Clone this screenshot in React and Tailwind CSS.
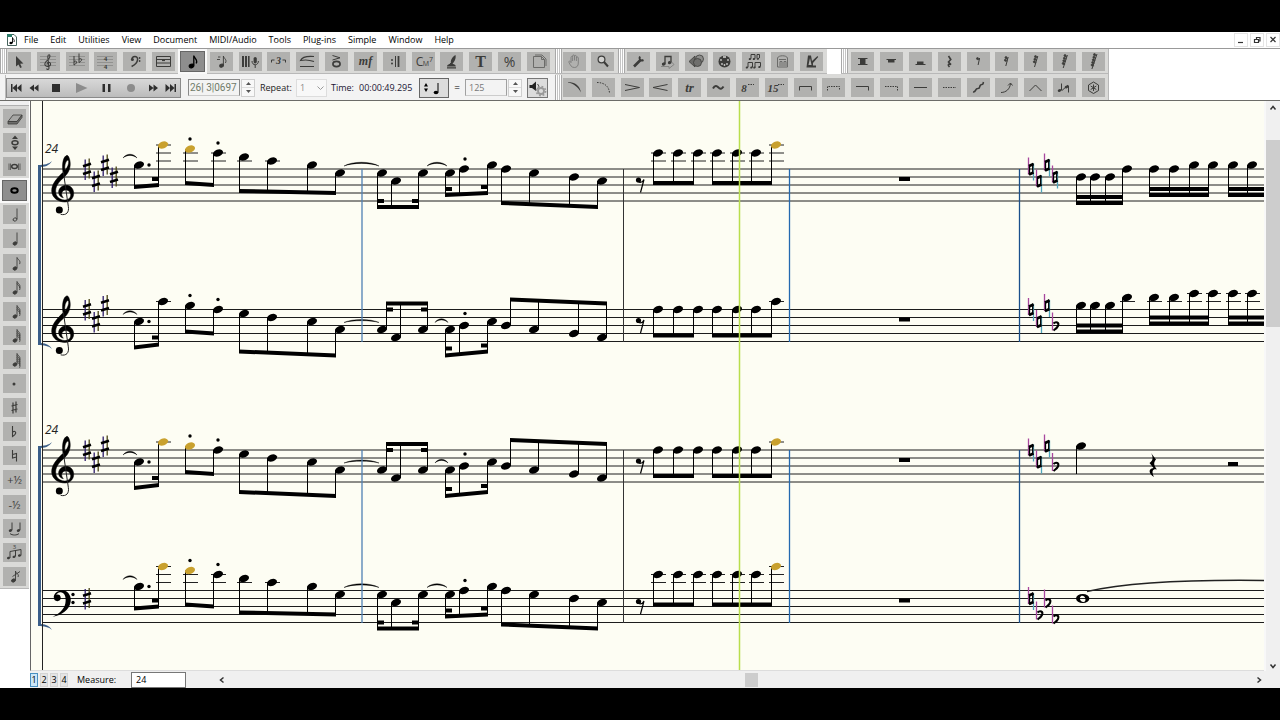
import React, { useState } from 'react';

const INK = '#3c3c3a';
const GOLD = '#c9a12e';

/* ---------- small shapes shared by the icons ---------- */

const MiniStaff = () => (
  <path d="M3 4.5H19M3 7.5H19M3 10.5H19M3 13.5H19" stroke="#858583" strokeWidth="0.7" fill="none" />
);

const Head = ({ x, y, r = 2 }) => (
  <ellipse cx={x} cy={y} rx={r} ry={r * 0.75} transform={`rotate(-20 ${x} ${y})`} />
);

// a note with the given number of flags, used in the duration palette
const FlagNote = ({ flags = 0, hollow }) => (
  <g fill={hollow ? 'none' : INK} stroke={INK} strokeWidth="0.9">
    <Head x={12} y={14.5} r={2} />
    <path d="M14 14V3.5" fill="none" />
    {Array.from({ length: flags }, (_, i) => (
      <path key={i} d={`M14 ${3.5 + i * 1.9}c1 2.4 4 3 2.6 6.6`} fill="none" />
    ))}
  </g>
);

const FlagRest = ({ flags }) => (
  <g fill={INK} stroke={INK} strokeWidth="0.8">
    <path d={`M${12 + flags * 0.6} ${7 - flags}L${11.4 - flags * 0.3} ${12 + flags}`} fill="none" strokeWidth="1" />
    {Array.from({ length: flags }, (_, i) => (
      <g key={i}>
        <circle cx={10 + flags * 0.5 - i * 0.6} cy={7.6 - flags + i * 2.6} r="1" />
        <path d={`M${10 + flags * 0.5 - i * 0.6} ${8.4 - flags + i * 2.6}h2`} fill="none" />
      </g>
    ))}
  </g>
);

const T = ({ x = 11.5, y = 14, size = 12, serif, italic, bold, children }) => (
  <text
    x={x}
    y={y}
    fontSize={size}
    textAnchor="middle"
    fill={INK}
    fontFamily={serif ? '"Liberation Serif", serif' : '"Open Sans", sans-serif'}
    fontStyle={italic ? 'italic' : 'normal'}
    fontWeight={bold ? 700 : 400}
  >
    {children}
  </text>
);

const line = (d, extra) => <path d={d} fill="none" stroke={INK} strokeWidth="1" {...extra} />;
const solid = (d) => <path d={d} fill={INK} />;

const mainTools = [
  ['Selection', solid('M8 4V14.5L10.5 12.4L12.2 16L13.8 15.2L12.2 11.7L15.4 11.4Z')],
  ['Clef', <><MiniStaff />{line('M12 16.5L10.8 5c0-3 2.6-3 2 0c-.5 3-5 4-5 7c0 3.4 6 3 5.8 0c-.3-2.6-4-2-3.4.6M12 16.5c-.6 1.4-2.4 1-2.4 0', { strokeWidth: 1.1 })}</>],
  ['Key signature', <><MiniStaff />{line('M8 4v9c4-2 3-5 0-3.4M13 1.5v9c4-2 3-5 0-3.4')}</>],
  ['Time signature', <><MiniStaff /><T y={8.5} size={7} serif bold>4</T><T y={16.5} size={7} serif bold>4</T></>],
  ['Bass clef', <g fill={INK}>{line('M9 7.5c0-4 6-4 5.6 0c-.3 4-3 5.500-6 7', { strokeWidth: 1.5 })}<circle cx="9.400" cy="7.600" r="1.500" /><circle cx="16.600" cy="6" r="0.900" /><circle cx="16.600" cy="9" r="0.900" /></g>],
  ['Measure', <>{line('M4.5 4.5H18.5V14.5H4.5ZM4.5 7.5H18.5M4.5 11H18.5')}{solid('M10 7.5h3v1.6h-3z')}</>],
  ['Simple entry', <g fill="#000" stroke="#000"><Head x={10.5} y={14} r={2.4} /><path d="M12.8 13.6V3.5c.4 3 4.6 4 2.4 8" fill="none" strokeWidth="1.3" /></g>],
  ['Speedy entry', <g fill={INK} stroke={INK}><Head x={11.6} y={13.6} r={2} /><path d="M13.4 13V4c.4 2.6 4 3.6 2 7M8 5h2.4M7 7.5h3" fill="none" strokeWidth="0.9" /></g>],
  ['HyperScribe', <>{solid('M3 4h2v11h-2zM6 4h2v11H6zM9 4h1.6v11H9z')}<rect x="14.6" y="5" width="3.2" height="6.4" rx="1.6" fill={INK} />{line('M13 9c0 5 6.4 5 6.4 0M16.2 13v3')}</>],
  ['Tuplet', <><T x={11.5} y={12} size={10} serif italic bold>3</T>{line('M4.5 10.5V8H7.5M15.5 8H18.5V10.5')}</>],
  ['Smart shape', line('M18 4.500C12 4 6 5 4.500 8.500C9 7.500 14 8 18 9.500M4 14.500H18', { strokeWidth: 1.1 })],
  ['Articulation', <>{line('M7.5 3.5L15 5.8L7.5 8')}<ellipse cx="11.5" cy="12" rx="3.6" ry="2.6" fill="none" stroke={INK} strokeWidth="1.6" /></>],
  ['Expression', <T y={13} size={12} serif italic bold>mf</T>],
  ['Repeat', <>{line('M12.5 4V15', { strokeWidth: 1 })}{line('M15.5 4V15', { strokeWidth: 1.8 })}<circle cx="9" cy="8" r="1" fill={INK} /><circle cx="9" cy="11.5" r="1" fill={INK} /></>],
  ['Chord', <><T x={7.5} y={14} size={12}>C</T><T x={14} y={14} size={7}>M</T><T x={19} y={9.5} size={7}>7</T></>],
  ['Lyrics', solid('M7 14.5c0-2 3-2.6 4-3c-.8-3 1-6.500 4.500-8.500c.8 3.200-1 7-3 8.700c2 .5 3.300 1.200 3.300 2.800zM7 15.200h9v1.200h-9z')],
  ['Text', <T y={15} size={16} serif bold>T</T>],
  ['Resize', <T y={14.5} size={14}>%</T>],
  ['Page layout', line('M6.500 4.500H14.500L17.500 7.500V15.500H6.500ZM14.500 4.500V7.500H17.500M8 3H15L19 7V14', { stroke: '#6b6b69' })],
];

const viewTools = [
  ['Hand grabber', line('M8 10.500V5.500c0-1.400 1.600-1.400 1.600 0V9M9.600 5V4c0-1.400 1.900-1.400 1.900 0V8.500M11.500 4.500c0-1.400 1.900-1.400 1.900 0V9M13.400 6c0-1.400 1.900-1.400 1.900 0v5c0 3-1.500 4.500-4 4.500c-3 0-4-2.400-5.500-5.500c0-1.400 1.400-1 2.200.5', { stroke: '#7c7c7a', strokeWidth: 0.9 })],
  ['Zoom', <><circle cx="10.500" cy="7.500" r="3.400" fill="#d0d0ce" stroke={INK} strokeWidth="1.200" />{line('M13 10L17 14.500', { strokeWidth: 2 })}</>],
];

const advancedTools = [
  ['Special tools', <>{line('M7 14.500L13.500 8', { strokeWidth: 2.6 })}{line('M13 4.500C11.500 7 13.500 9.500 16.500 8', { strokeWidth: 2 })}</>],
  ['Mirror', <g fill={INK}><path d="M9 11.500V4.500H15V10" fill="none" stroke={INK} strokeWidth="1.300" /><Head x={7.8} y={12} /><Head x={13.800} y={10.500} /><path d="M5 14.500h8v2l5-4-3-3" fill="none" stroke="#858583" /></g>],
  ['Graphics', <><path d="M4 9.500L10 4V15Z" fill="#6a6a68" stroke={INK} strokeWidth="0.8" /><circle cx="14.500" cy="7" r="4" fill="#8c8c8a" stroke={INK} strokeWidth="0.800" /><circle cx="12.500" cy="10.500" r="4" fill="#6f6f6d" stroke={INK} strokeWidth="0.800" /></>],
  ['MIDI', <><circle cx="11.500" cy="9.500" r="6" fill={INK} />{['8 8', '9 12', '11.5 13', '14 12', '15 8'].map((p) => { const [x, y] = p.split(' '); return <circle key={p} cx={x} cy={y} r="0.900" fill="#c8c8c6" />; })}<path d="M10 3.500h3v2.500h-3z" fill="#b1b1af" /></>],
  ['Ossia', <g fill={INK}>{line('M9 6.500V2.500H13V6.500M15 6.500V2.500H17.500V6M6 15V10.500H10.500V15M13 15V10.500H18.500V14.500')}<Head x={8} y={7} r={1.300} /><Head x={12} y={7} r={1.300} /><Head x={16} y={6.800} r={1.300} /><Head x={5} y={15.500} r={1.300} /><Head x={9.500} y={15.500} r={1.300} /><Head x={12.500} y={15.500} r={1.300} /><Head x={17.500} y={15} r={1.300} /></g>],
  ['Tempo', <>{line('M6.500 15V6c1-3 9-3 10 0v9zM9 14v-4.500h2V14M13 14v-4.500h2V14M8 7.500h7', { stroke: '#6b6b69' })}</>],
  ['Playback', <>{solid('M8 3.500H11L12 9L17.500 4L18.200 5L13 11V13.500H16V15.500H6.500Z')}<path d="M8.500 13L10 6L11.500 13Z" fill="#b1b1af" /></>],
];

const restTools = [
  ['Double whole rest', <>{line('M7 6.500H16.500M7 12.500H16.500')}{solid('M9 7h5.500v5h-5.500z')}</>],
  ['Whole rest', <>{line('M6.500 7.500H16')}{solid('M8 8h6.500v2.500h-6.500z')}</>],
  ['Half rest', <>{line('M6.500 12.500H16.500')}{solid('M8 9.500h6.500v3h-6.500z')}</>],
  ['Quarter rest', line('M10.500 4L12.800 7.500L10.500 10L13 12.500C10 11.500 9.500 13 11.500 15', { strokeWidth: 1.6 })],
  ...[['Eighth rest', 1], ['16th rest', 2], ['32nd rest', 3], ['64th rest', 4], ['128th rest', 5]].map(([n, f]) => [n, <FlagRest flags={f} />]),
];

const shapeTools = [
  ['Slur', solid('M5 4C12 4 17 8 18 14.500C15 9 11 6 5 4.600Z')],
  ['Dashed slur', line('M5 4.500C12 4.500 17 8 17.500 15', { strokeDasharray: '1.500 1.200' })],
  ['Decrescendo', line('M4 6.500L18.500 9.500L4 12.500')],
  ['Crescendo', line('M18.500 6.500L4 9.500L18.500 12.500')],
  ['Trill', <T y={13.500} size={13} serif italic bold>tr</T>],
  ['Trill extension', line('M6 10.500C8 6.500 10 8 11.500 9.500C13 11.500 15 11 16.500 8.500', { strokeWidth: 2 })],
  ['8va', <><T x={8} y={13.500} size={11} serif italic bold>8</T>{line('M12 6.500H18', { strokeDasharray: '1.500 1' })}</>],
  ['15ma', <><T x={8} y={13.500} size={11} serif italic bold>15</T>{line('M13 6.500H19', { strokeDasharray: '1.500 1' })}</>],
  ['Bracket', line('M5.500 12.500V8.500H17.500V12.500')],
  ['Dashed bracket', line('M5.500 12.500V8.500H17.500V12.500', { strokeDasharray: '1.500 1' })],
  ['Hook', line('M5 8.500H17.500V12.500')],
  ['Dashed hook', line('M5 8.500H17.500V12.500', { strokeDasharray: '1.500 1' })],
  ['Line', line('M5 9.500H18')],
  ['Dashed line', line('M5 9.500H18', { strokeDasharray: '1.500 1' })],
  ['Glissando', line('M6 14C9.500 14.500 7.500 10.500 11 10.500C14 10.500 11.500 6.500 15 6.500C16.500 6.500 16 5 16.500 4', { strokeWidth: 1.600 })],
  ['Bend', line('M6 14.500C11 14.500 15 11 15.500 5.500M13 7.500L15.500 5L17.500 7.500')],
  ['Bend hat', line('M5.500 13L11.500 7L17.500 13')],
  ['Tab slide', <g fill={INK}><Head x={6.500} y={12.500} r={1.800} /><Head x={13.500} y={9} r={1.800} />{line('M8.500 12.500V5.500M9 12.500L15 7M15.500 7.500V14.500')}</g>],
  ['Custom line', <>{line('M11.500 4L16.500 7V12.500L11.500 15.500L6.500 12.500V7Z')}{line('M11.500 6.500V13M8.700 8L14.300 11.500M14.300 8L8.700 11.500', { strokeWidth: 1 })}</>],
];

const durationTools = [
  ['Eraser', <><path d="M5 12.500L10 6H19L14 12.500Z" fill="#a6a6a4" stroke={INK} strokeWidth="0.800" /><path d="M5 12.500H14L19 6V8.500L14 15H5Z" fill="#6e6e6c" stroke={INK} strokeWidth="0.800" /></>],
  ['Repitch', <>{solid('M12 2.500L15 6H9ZM12 17L15 13.500H9Z')}<ellipse cx="12" cy="9.700" rx="3" ry="2" fill="none" stroke={INK} strokeWidth="1.500" /></>],
  ['Double whole note', <><ellipse cx="11.500" cy="9.500" rx="2.800" ry="2" fill="none" stroke={INK} strokeWidth="1.500" />{line('M6 6.500V13M7.500 6.500V13M15.500 6.500V13M17 6.500V13', { strokeWidth: 0.700 })}</>],
  ['Whole note', <ellipse cx="11.500" cy="9.500" rx="3.200" ry="2.200" fill="none" stroke="#000" strokeWidth="2" />],
  ['Half note', <FlagNote hollow />],
  ['Quarter note', <FlagNote />],
  ['Eighth note', <FlagNote flags={1} />],
  ['16th note', <FlagNote flags={2} />],
  ['32nd note', <FlagNote flags={3} />],
  ['64th note', <FlagNote flags={4} />],
  ['128th note', <FlagNote flags={5} />],
  ['Dot', <circle cx="11" cy="10" r="1.500" fill={INK} />],
  ['Sharp', line('M10 4.500V15.500M13 3.500V14.500M8.500 8L14.500 6.500M8.500 12.500L14.500 11', { strokeWidth: 1.200 })],
  ['Flat', line('M9.500 4V14.500C14.500 11.500 13 8 9.500 10', { strokeWidth: 1.100 })],
  ['Natural', line('M9.500 4V12L13.500 11M13.500 15.500V7.500L9.500 8.500', { strokeWidth: 1.100 })],
  ['Half step up', <T y={13.500} size={11}>+½</T>],
  ['Half step down', <T y={13.500} size={11}>-½</T>],
  ['Tie', <g fill={INK}><Head x={7.500} y={11.500} r={1.800} /><Head x={15.500} y={11.500} r={1.800} />{line('M9 11V3.500M17 11V3.500M7 14.500C9 16.500 14 16.500 16 14.500')}</g>],
  ['Triplet', <g fill={INK}><Head x={5.500} y={15} r={1.600} /><Head x={11} y={13.800} r={1.600} /><Head x={16.500} y={12.500} r={1.600} />{line('M7 15V8.500L18 6.500V12.500M12.500 13.500V7.500')}<T x={11.500} y={6} size={6}>3</T></g>],
  ['Grace note', <g fill={INK} stroke={INK} strokeWidth="0.900"><Head x={10.500} y={13.500} r={2} /><path d="M12.500 13V4c.4 2.600 4 3 2.500 6M9.500 9.500L17 4.500" fill="none" /></g>],
];

const Tool = ({ label, icon, active }) => (
  <button
    type="button"
    aria-label={label}
    className={
      active
        ? 'w-[23px] h-[19px] shrink-0 bg-[#8e8e8e] outline-1 outline-[#666] ring-3 ring-[#f8f8f8]'
        : 'w-[23px] h-[19px] shrink-0 bg-[#b1b1af]'
    }
  >
    <svg viewBox="0 0 23 19" className="block w-[23px] h-[19px]">{icon}</svg>
  </button>
);

const Palette = ({ tools, active, className }) => (
  <div className={`flex items-center justify-between ${className}`}>
    {tools.map(([label, icon]) => (
      <Tool key={label} label={label} icon={icon} active={active === label} />
    ))}
  </div>
);

const Grip = () => (
  <div className="w-[7px] h-full shrink-0 flex justify-between bg-white border-l border-r border-[#a8a8a8] px-px">
    <div className="w-px h-full bg-[#c4c4c4]" />
    <div className="w-px h-full bg-[#c4c4c4]" />
  </div>
);

const Spinner = ({ label }) => (
  <div className="w-[14px] h-[18px] shrink-0 flex flex-col border border-[#cfcfcf] bg-[#f8f8f8]">
    <button type="button" aria-label={`${label} up`} className="flex-1 flex items-center justify-center">
      <svg viewBox="0 0 5 3" className="w-[5px] h-[3px]"><path d="M0 3L2.500 0L5 3Z" fill="#555" /></svg>
    </button>
    <button type="button" aria-label={`${label} down`} className="flex-1 flex items-center justify-center border-t border-[#ddd]">
      <svg viewBox="0 0 5 3" className="w-[5px] h-[3px]"><path d="M0 0L2.500 3L5 0Z" fill="#555" /></svg>
    </button>
  </div>
);

const transport = [
  ['Rewind to start', 'M6 6h1.500v8H6zM12 6v8L7.500 10zM16.500 6v8L12 10z', '#2e2e2e', 'w-[17px]'],
  ['Rewind', 'M11 6.500v7L6.500 10zM15.500 6.500v7L11 10z', '#2e2e2e', 'w-[20px]'],
  ['Stop', 'M7 6h8v8H7z', '#2e2e2e', 'w-[24px]'],
  ['Play', 'M6 5v10L17.500 10z', '#8c8c8c', 'w-[25px]'],
  ['Pause', 'M7.500 6h2.500v8H7.500zM13 6h2.500v8H13z', '#2e2e2e', 'w-[25px]'],
  ['Record', 'M15 10a4 4 0 1 1-8 0a4 4 0 1 1 8 0z', '#8c8c8c', 'w-[25px]'],
  ['Fast forward', 'M7 6.500v7L11.500 10zM11.500 6.500v7L16 10z', '#2e2e2e', 'w-[19px]'],
  ['Forward to end', 'M5.500 6v8L10 10zM10 6v8L14.500 10zM14.500 6h1.500v8h-1.500z', '#2e2e2e', 'w-[18px]'],
];

/* ---------- score ---------- */

// Note: [x, position in half spaces below the top line, gold?]
// Groups carry the beam as [y at first stem, y at last stem], relative to the top line.
const outerVoice = (gold) => ({
  groups: [
    { notes: [[139, -1], [163, -6, gold]], beam: [18, 16], stubs: [[1, -1, 10]] },
    { notes: [[190, -5, gold], [218, -4]], beam: [14, 16] },
    { notes: [[244, -3], [272, -2], [312, -1], [340, 1]], beam: [22, 24] },
    { notes: [[382, 1], [396, 3], [423, 1]], beam: [38, 38], stubs: [[0, 1, 32], [2, -1, 32]] },
    { notes: [[450, 1], [464, 0], [492, -1]], beam: [26, 24], stubs: [[0, 1, 20], [2, -1, 18]] },
    { notes: [[506, 0], [534, 1], [574, 2], [602, 3]], beam: [34, 38] },
    { notes: [[658, -4], [678, -4], [698, -4]], beam: [14, 14] },
    { notes: [[717, -4], [737, -4], [756, -4], [776, -6, gold]], beam: [14, 14] },
  ],
  dots: [[149, -4], [190, -30], [218, -26], [465, -10]],
  ties: [[123, 137, -11, -16], [344, 379, -3, -8], [427, 447, -3, -8]],
});

const innerVoice = (gold) => ({
  groups: [
    { notes: [[139, 3], [163, -2, gold]], beam: [38, 35], stubs: [[1, -1, 28]] },
    { notes: [[190, -1, gold], [218, 0]], beam: [22, 24] },
    { notes: [[244, 1], [272, 2], [312, 3], [340, 5]], beam: [42, 46] },
    { notes: [[382, 5], [396, 7], [423, 5]], beam: [-6, -6], stubs: [[0, 1, 0], [2, -1, 0]], up: true },
    { notes: [[450, 5], [464, 4], [492, 3]], beam: [46, 42], stubs: [[0, 1, 39], [2, -1, 36]] },
    { notes: [[506, 4], [534, 5], [574, 6], [602, 7]], beam: [-10, -6], up: true },
    { notes: [[658, 0], [678, 0], [698, 0]], beam: [26, 26] },
    { notes: [[717, 0], [737, 0], [756, 0], [776, -2, gold]], beam: [26, 26] },
  ],
  dots: [[149, 12], [190, -14], [218, -10], [465, 4]],
  ties: [[123, 137, 5, 0], [344, 379, 13, 9], [435, 448, 13, 8]],
});

const staves = [
  {
    top: 169,
    clef: 'treble',
    sharps: [0, 3, -1, 2],
    voice: outerVoice(true),
    change: [['n', 0], ['n', 3], ['n', -1], ['n', 2]],
    tail: [
      { notes: [[1081, 2], [1095, 2], [1110, 2], [1127, 0]], beam: [34, 34], second: -6 },
      { notes: [[1154, 0], [1174, 0], [1194, -1], [1213, -1]], beam: [26, 26], second: -6 },
      { notes: [[1233, -1], [1252, -1]], beam: [26, 26], second: -6, open: true },
    ],
  },
  {
    top: 309.5,
    clef: 'treble',
    sharps: [0, 3, -1],
    voice: innerVoice(false),
    change: [['n', 0], ['n', 3], ['n', -1], ['b', 4]],
    tail: [
      { notes: [[1081, -1], [1095, -1], [1110, -1], [1127, -3]], beam: [22, 22], second: -6 },
      { notes: [[1154, -3], [1174, -3], [1194, -4], [1213, -4]], beam: [14, 14], second: -6 },
      { notes: [[1233, -4], [1252, -4]], beam: [14, 14], second: -6, open: true },
    ],
  },
  {
    top: 450,
    clef: 'treble',
    sharps: [0, 3, -1],
    voice: innerVoice(true),
    change: [['n', 0], ['n', 3], ['n', -1], ['b', 4]],
    tail: [],
  },
  {
    top: 590.5,
    clef: 'bass',
    sharps: [2],
    voice: outerVoice(true),
    change: [['n', 2], ['b', 6], ['b', 3], ['b', 7]],
    tail: [],
  },
];

const NoteHead = ({ x, y, gold }) => (
  <ellipse cx={x} cy={y} rx="5.200" ry="3.500" fill={gold ? GOLD : '#000'} transform={`rotate(-20 ${x} ${y})`} />
);

const Ledgers = ({ x, pos }) => {
  const rows = [];
  for (let p = -2; p >= pos; p -= 2) rows.push(p);
  return rows.map((p) => <path key={p} d={`M${x - 7} ${p * 4}H${x + 8}`} stroke="#222" strokeWidth="1" />);
};

const Group = ({ notes, beam, stubs = [], up, second, open }) => {
  const side = up ? 4.5 : -4.5;
  const first = notes[0][0] + side;
  const last = open ? 1270 : notes[notes.length - 1][0] + side;
  const beamAt = (x) => beam[0] + ((beam[1] - beam[0]) * (x - first)) / (last - first);
  return (
    <g>
      {notes.map(([x, pos, gold]) => (
        <g key={x}>
          <Ledgers x={x} pos={pos} />
          <path d={`M${x + side} ${pos * 4}V${beamAt(x + side)}`} stroke="#000" strokeWidth="1" />
          <NoteHead x={x} y={pos * 4} gold={gold} />
        </g>
      ))}
      <path d={`M${first - 0.5} ${beam[0] - 2}L${last + 0.5} ${beam[1] - 2}V${beam[1] + 2}L${first - 0.5} ${beam[0] + 2}Z`} />
      {second && <rect x={first - 0.5} y={beam[0] + second - 2} width={last - first + 1} height="4" />}
      {stubs.map(([i, dir, y]) => {
        const sx = notes[i][0] + side;
        return <rect key={i} x={dir > 0 ? sx : sx - 6.5} y={y - 2} width="6.500" height="4" />;
      })}
    </g>
  );
};

const Sharp = ({ x, pos }) => (
  <g transform={`translate(${x} ${pos * 4})`} fill="none">
    <path d="M-1.800 -9.500V11" stroke="#2d1c6b" strokeWidth="1.300" />
    <path d="M2.200 -10.500V9.500" stroke="#4a4416" strokeWidth="1.300" />
    <path d="M-4 -2.800L4 -5.200M-4 5L4 2.600" stroke="#000" strokeWidth="2.600" />
  </g>
);

const Accidental = ({ kind, x, pos }) => (
  <g transform={`translate(${x} ${pos * 4})`} fill="none">
    {kind === 'n' ? (
      <>
        <path d="M-2.500 -11.500V5.500" stroke="#a8479e" strokeWidth="1.300" />
        <path d="M2.500 -5.500V11.500" stroke="#4fa5bd" strokeWidth="1.300" />
        <path d="M-2 -3L2.500 -5M-2 5.500L2.500 3.500" stroke="#000" strokeWidth="3" />
        <path d="M-1.500 -4V6M1.700 -6V4" stroke="#000" strokeWidth="1.300" />
      </>
    ) : (
      <>
        <path d="M-2.500 -13V5" stroke="#a8479e" strokeWidth="1.300" />
        <path d="M-1.500 -2C1 -4.500 4.500 -3 3 0.500C2 2.800 -0.300 4 -1.500 5" stroke="#000" strokeWidth="2" />
      </>
    )}
  </g>
);

const TrebleClef = () => (
  <g transform="scale(0.3333) translate(0 -206)">
    <path
      fillRule="evenodd"
      stroke="#000"
      strokeWidth="1.500"
      d="M201 165C190 168 185 190 189 216C170 235 155 250 155 272C156 293 175 305 195 305C212 304 222 292 221 277C220 262 208 254 197 255C184 256 175 266 176 277C177 287 184 291 190 292C184 285 183 276 190 271C197 266 210 270 212 282C213 294 203 300 193 299C177 298 166 288 167 270C168 252 182 240 197 226C207 215 213 200 210 182C208 172 205 165 201 165ZM203 179C196 184 193 196 195 210C203 201 207 190 206 182Z"
    />
    <path d="M190 214L205 318C208 336 199 346 182 342" fill="none" stroke="#222" strokeWidth="3" />
    <circle cx="178" cy="329" r="10.500" />
  </g>
);

const BassClef = () => (
  <g transform="scale(0.3333) translate(0 -721)">
    <path d="M161 742C162 725 180 718 195 722C208 728 214 740 212 755C208 780 185 796 158 800C182 788 196 775 197 752C198 736 192 725 180 726C172 727 167 733 166 742Z" />
    <circle cx="172" cy="743" r="10" />
    <circle cx="219" cy="733" r="5" />
    <circle cx="219" cy="757" r="5" />
  </g>
);

const Staff = ({ top, clef, sharps, voice, change, tail }) => (
  <g transform={`translate(0 ${top})`}>
    {[0, 8, 16, 24, 32].map((y) => (
      <path key={y} d={`M42 ${y}H2400`} stroke="#1c1c1c" strokeWidth="1" />
    ))}
    {clef === 'treble' ? <TrebleClef /> : <BassClef />}
    {sharps.map((pos, i) => <Sharp key={i} x={87 + i * 9} pos={pos} />)}
    {voice.groups.map((g, i) => <Group key={i} {...g} />)}
    {voice.dots.map(([x, y]) => <circle key={x} cx={x} cy={y} r="1.700" />)}
    {voice.ties.map(([a, b, y, peak]) => (
      <path
        key={a}
        d={`M${a} ${y}C${a + (b - a) * 0.25} ${peak} ${b - (b - a) * 0.25} ${peak} ${b} ${y}C${b - (b - a) * 0.25} ${peak + 1.5} ${a + (b - a) * 0.25} ${peak + 1.5} ${a} ${y}Z`}
        stroke="#000"
        strokeWidth="0.400"
      />
    ))}
    {/* eighth rest, then the whole-measure rest */}
    <circle cx="638.500" cy="11" r="2.600" />
    <path d="M638.500 13C641 14 643 12.500 644 10.500L640.500 23.500" fill="none" stroke="#000" strokeWidth="1.200" />
    <rect x="899" y="8" width="11" height="4" />
    {change.map(([kind, pos], i) => <Accidental key={i} kind={kind} x={1031 + i * 8} pos={pos} />)}
    {tail.map((g, i) => <Group key={i} {...g} />)}
  </g>
);

const Bracket = ({ top, bottom }) => (
  <g fill="#3b5e88">
    <rect x="38" y={top} width="3" height={bottom - top} />
    <path d={`M38 ${top}C44 ${top} 49 ${top - 1} 52 ${top - 4}C49 ${top + 1} 45 ${top + 2} 38 ${top + 2}Z`} />
    <path d={`M38 ${bottom}C44 ${bottom} 49 ${bottom + 1} 52 ${bottom + 4}C49 ${bottom - 1} 45 ${bottom - 2} 38 ${bottom - 2}Z`} />
  </g>
);

const barlines = [[362, '#4f80b3', 1.3], [623.5, '#333', 1], [789.5, '#2469b0', 1.3], [1019.5, '#1a4f8c', 1.3]];

const Score = () => (
  <svg viewBox="31 101 1233 569" preserveAspectRatio="xMinYMin slice" className="block w-full h-full" role="img" aria-label="Score">
    {staves.map((s) => <Staff key={s.top} {...s} />)}
    {[[169, 342], [450, 623]].map(([a, b]) =>
      barlines.map(([x, color, w]) => <path key={`${a}-${x}`} d={`M${x} ${a}V${b}`} stroke={color} strokeWidth={w} />)
    )}
    <Bracket top={165} bottom={345} />
    <Bracket top={446} bottom={626} />
    <path d="M42.500 101V670" stroke="#222" strokeWidth="1" />
    {[153, 434].map((y) => (
      <text key={y} x="45" y={y} fontSize="12" fontStyle="italic" fontFamily='"Open Sans", sans-serif' fill="#222">24</text>
    ))}

    {/* last measure of the lower two staves */}
    <NoteHead x={1081} y={446} />
    <path d="M1076.500 446V474" stroke="#000" strokeWidth="1" />
    <path d="M1151 453L1156 459.500C1153.500 462.500 1153.500 465 1157 469.500C1153 468.500 1151 471 1154 477C1148.500 473.500 1148 468.500 1153.500 468L1149.500 463C1153 460.500 1153.500 457.500 1151 453Z" />
    <rect x="1228" y="462" width="10" height="4" />
    <path fillRule="evenodd" d="M1076 598.500A6.700 4.500 0 1 0 1089.400 598.500A6.700 4.500 0 1 0 1076 598.500ZM1080 597.500C1081 595 1084 595.500 1085.200 598C1086 601 1085 602.200 1083 602C1081 601.500 1079.500 600 1080 597.500Z" />
    <path d="M1087 591.500C1130 582 1190 579.500 1266 580.500" fill="none" stroke="#222" strokeWidth="1.500" />

    <path d="M739.500 101V670" stroke="#b9de4c" strokeWidth="1.500" />
  </svg>
);

/* ---------- window ---------- */

const menus = ['File', 'Edit', 'Utilities', 'View', 'Document', 'MIDI/Audio', 'Tools', 'Plug-ins', 'Simple', 'Window', 'Help'];

const windowButtons = [
  ['Minimize', 'M4 9.500H9'],
  ['Restore', 'M4.500 6.500H8.500V9.500H4.500ZM6.500 6V4.500H10V8H9'],
  ['Close', 'M4.500 4L9.500 9M9.500 4L4.500 9'],
];

const Arrow = ({ label, d }) => (
  <button type="button" aria-label={label} className="w-[14px] h-[14px] shrink-0">
    <svg viewBox="0 0 14 14" className="block w-[14px] h-[14px]"><path d={d} fill="none" stroke="#333" strokeWidth="1.500" /></svg>
  </button>
);

const App = () => {
  const [measure, setMeasure] = useState('24');
  const [tempo, setTempo] = useState('125');
  const [counter, setCounter] = useState('26| 3|0697');
  const [layer, setLayer] = useState(1);

  return (
    <div className="h-screen flex flex-col bg-black py-8 font-['Open_Sans',sans-serif] text-[10px] text-black overflow-hidden">
      <div className="flex-1 min-h-0 flex flex-col bg-white">
        {/* Menu bar */}
        <div className="h-[17px] shrink-0 flex items-center border-b border-[#999] pl-[6px]">
          <svg viewBox="0 0 12 14" className="w-[12px] h-[14px] shrink-0">
            <path d="M1.500 1.500H8L10.500 4V12.500H1.500Z" fill="#fff" stroke="#46625c" />
            <path d="M1 1H6V4H1Z" fill="#2e7d6b" />
            <ellipse cx="5" cy="10" rx="1.600" ry="1.200" />
            <path d="M6.500 10V4.500C7 6.500 9 6.500 8 9" fill="none" stroke="#000" strokeWidth="0.900" />
          </svg>
          <nav className="flex-1 flex items-center text-[9px]">
            {menus.map((m) => (
              <button key={m} type="button" className="px-[6px] leading-4 whitespace-nowrap">{m}</button>
            ))}
          </nav>
          <div className="flex gap-[2px]">
            {windowButtons.map(([label, d]) => (
              <button key={label} type="button" aria-label={label} className="w-[14px] h-[14px] border border-[#e4e4e4]">
                <svg viewBox="1 1 12 12" className="block w-[12px] h-[12px]"><path d={d} fill="none" stroke="#333" strokeWidth="1.200" /></svg>
              </button>
            ))}
          </div>
        </div>

        {/* Tool palettes */}
        <div className="h-[25px] shrink-0 flex items-center">
          <div className="h-full flex items-center bg-[#dadad8] border-b border-[#b8b8b8]">
            <Grip />
            <Palette tools={mainTools} active="Simple entry" className="w-[542px] ml-px" />
            <div className="w-[5px]" />
            <Grip />
            <Palette tools={viewTools} className="w-[51px] ml-px" />
            <div className="w-[4px]" />
            <Grip />
            <Palette tools={advancedTools} className="w-[196px] ml-[2px] mr-[4px]" />
          </div>
          <div className="w-[14px] shrink-0" />
          <div className="h-full flex items-center bg-[#dadad8] border-b border-r border-[#b8b8b8]">
            <Grip />
            <Palette tools={restTools} className="w-[254px] ml-[3px] mr-[3px]" />
          </div>
        </div>

        {/* Playback controls and smart shapes */}
        <div className="h-[27px] shrink-0 flex items-center border-b border-[#6c6c68]">
          <div className="h-full w-[555px] shrink-0 flex items-center bg-[#f3f3f3] pt-px">
            <div className="w-[6px] h-full shrink-0 border-r border-[#bbb]" />
            <div className="w-[175px] h-[20px] shrink-0 flex items-center bg-linear-to-b from-[#d8d8d8] to-[#bcbcbc] border border-[#8a8a8a]">
              {transport.map(([label, d, color, width]) => (
                <button key={label} type="button" aria-label={label} className={`${width} h-[18px] shrink-0 flex justify-center`}>
                  <svg viewBox="0 1 22 18" className="block w-[22px] h-[18px] shrink-0"><path d={d} fill={color} /></svg>
                </button>
              ))}
            </div>
            <input
              aria-label="Counter"
              value={counter}
              onChange={(e) => setCounter(e.target.value)}
              className="w-[52px] h-[17px] shrink-0 ml-[7px] mr-px px-px border border-[#8a8a8a] border-b-[#ccc] bg-[#f3f3f3] font-['Roboto',sans-serif] text-[10px] text-[#6f7a68]"
            />
            <Spinner label="Counter" />
            <label htmlFor="repeat" className="w-[41px] shrink-0 pl-[5px] whitespace-nowrap text-[9px] text-[#222]">Repeat:</label>
            <div className="relative w-[31px] h-[18px] shrink-0">
              <select id="repeat" defaultValue="1" className="appearance-none w-full h-full border border-[#ddd] bg-[#f8f8f8] pl-[3px] text-[9px] text-[#888]">
                <option>1</option>
                <option>2</option>
              </select>
              <svg viewBox="0 0 7 5" className="absolute right-[3px] top-[7px] w-[7px] h-[5px] pointer-events-none"><path d="M0.500 0.500L3.500 3.500L6.500 0.500" fill="none" stroke="#999" /></svg>
            </div>
            <div className="flex shrink-0 w-[92px] pl-[4px] text-[9px] text-[#1a1533] whitespace-nowrap">
              <span className="w-[28px]">Time:</span>
              <span>00:00:49.295</span>
            </div>
            <button type="button" aria-label="Beat unit" className="w-[30px] h-[20px] shrink-0 bg-[#dcdcdc] border border-[#666]">
              <svg viewBox="0 0 28 18" className="block w-[28px] h-[18px]">
                <path d="M6 4L8 7.500H4ZM6 13L8 9.500H4Z" />
                <ellipse cx="16" cy="13.500" rx="2.300" ry="1.800" />
                <path d="M18 13.500V4" stroke="#000" fill="none" />
              </svg>
            </button>
            <span className="w-[16px] shrink-0 text-center">=</span>
            <input
              aria-label="Tempo"
              value={tempo}
              onChange={(e) => setTempo(e.target.value)}
              className="w-[42px] h-[17px] shrink-0 px-[3px] mr-px border border-[#a0a0a0] border-b-[#ccc] bg-[#f3f3f3] text-[9px] text-[#777]"
            />
            <Spinner label="Tempo" />
            <button type="button" aria-label="Playback settings" className="w-[21px] h-[20px] shrink-0 ml-[5px] bg-[#dcdcdc] border border-[#777]">
              <svg viewBox="0 0 19 18" className="block w-[19px] h-[18px]">
                <path d="M1.500 6H4L8 2.500V12L4 9H1.500Z" fill="#222" />
                <path d="M9.500 5C11 6.500 11 8 9.500 9.500" fill="none" stroke="#444" />
                <circle cx="13" cy="12" r="3" fill="none" stroke="#999" strokeWidth="1.800" />
                <circle cx="13" cy="12" r="4.600" fill="none" stroke="#999" strokeWidth="1.600" strokeDasharray="1.800 1.800" />
              </svg>
            </button>
          </div>
          <div className="h-full flex items-center bg-[#dadad8] border-r border-[#b8b8b8] pt-px">
            <Grip />
            <Palette tools={shapeTools} className="w-[542px] ml-px mr-[3px]" />
          </div>
        </div>

        <div className="flex-1 min-h-0 flex">
          {/* Duration palette */}
          <aside className="w-[30px] shrink-0 bg-white">
            <div className="w-[29px] bg-[#dadad8] border-b border-[#b8b8b8] pb-[2px]">
              <div className="h-[5px] border-b border-[#b0b0b0] bg-[#f0f0f0]" />
              <div className="h-[480px] flex flex-col items-center justify-between pt-[3px] pr-px">
                {durationTools.map(([label, icon]) => (
                  <Tool key={label} label={label} icon={icon} active={label === 'Whole note'} />
                ))}
              </div>
            </div>
          </aside>

          <div className="flex-1 min-w-0 flex flex-col">
            <div className="flex-1 min-h-0 flex">
              <main className="flex-1 min-w-0 overflow-hidden bg-[#fdfdf3] border-l border-[#666] border-b border-b-[#ddd]">
                <Score />
              </main>
              <div className="w-[16px] shrink-0 flex flex-col items-center bg-[#f0f0f0] border-l-2 border-[#f8f8f8]">
                <Arrow label="Scroll up" d="M4.500 8.500L7 5.500L9.500 8.500" />
                <div className="flex-1 w-full pt-[25px]">
                  <div className="h-[187px] w-full bg-[#cdcdcd]" />
                </div>
                <Arrow label="Scroll down" d="M4.500 7.500L7 10.500L9.500 7.500" />
              </div>
            </div>

            {/* Status bar */}
            <div className="h-[17px] shrink-0 flex items-center bg-[#f0f0f0]">
              <div className="flex gap-[2px]">
                {[1, 2, 3, 4].map((n) => (
                  <button
                    key={n}
                    type="button"
                    onClick={() => setLayer(n)}
                    className={
                      n === layer
                        ? 'w-[8px] h-[14px] text-[9px] leading-3 border border-[#4a90c0] bg-[#cbe6f8]'
                        : 'w-[8px] h-[14px] text-[9px] leading-3 border border-[#d4d4d4] bg-[#e4e4e4]'
                    }
                  >
                    {n}
                  </button>
                ))}
              </div>
              <label htmlFor="measure" className="w-[63px] shrink-0 pl-[9px] text-[9px]">Measure:</label>
              <input
                id="measure"
                value={measure}
                onChange={(e) => setMeasure(e.target.value)}
                className="w-[55px] h-[16px] shrink-0 px-[4px] border border-[#777] bg-white text-[9px]"
              />
              <div className="w-[29px] shrink-0" />
              <Arrow label="Scroll left" d="M8.500 4.500L5.500 7L8.500 9.500" />
              <div className="flex-1 h-[14px] flex">
                <div className="w-1/2" />
                <div className="w-[13px] h-full ml-1 bg-[#cdcdcd]" />
              </div>
              <Arrow label="Scroll right" d="M5.500 4.500L8.500 7L5.500 9.500" />
              <div className="w-[14px] shrink-0" />
            </div>
          </div>
        </div>
      </div>
    </div>
  );
};

export default App;
